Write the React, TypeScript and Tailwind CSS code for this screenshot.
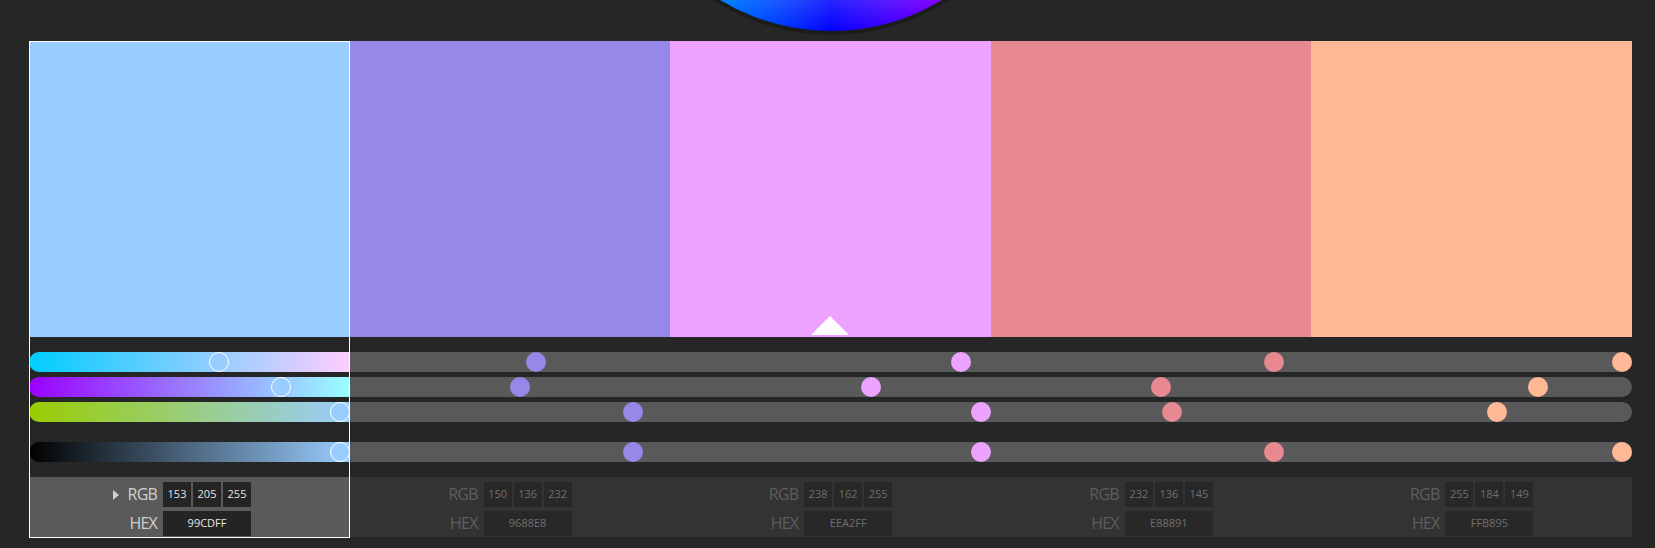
const swatches = [
  { rgb: [153, 205, 255], hex: "99CDFF" },
  { rgb: [150, 136, 232], hex: "9688E8" },
  { rgb: [238, 162, 255], hex: "EEA2FF" },
  { rgb: [232, 136, 145], hex: "E88891" },
  { rgb: [255, 184, 149], hex: "FFB895" },
];

const SELECTED = 0;
const MARKED = 2;

const rgbStr = (c: number[]) => `rgb(${c[0]}, ${c[1]}, ${c[2]})`;

function channelGradient(rgb: number[], ch: number) {
  const lo = [...rgb];
  const hi = [...rgb];
  lo[ch] = 0;
  hi[ch] = 255;
  return `linear-gradient(to right, ${rgbStr(lo)}, ${rgbStr(hi)})`;
}

function Track({
  idx,
  frac,
  color,
  gradient,
}: {
  idx: number;
  frac: number;
  color: string;
  gradient?: string;
}) {
  const round =
    idx === 0 ? "rounded-l-full" : idx === swatches.length - 1 ? "rounded-r-full" : "";
  return (
    <div
      className={`relative h-5 ${round} ${gradient ? "" : "bg-[#595959]"}`}
      style={gradient ? { background: gradient } : undefined}
    >
      <div
        className={`absolute top-0 h-5 w-5 rounded-full ${
          gradient ? "border-[1.5px] border-white" : ""
        }`}
        style={{ left: `calc((100% - 20px) * ${frac})`, backgroundColor: color }}
      />
    </div>
  );
}

function ValuePanel({ rgb, hex, active }: { rgb: number[]; hex: string; active: boolean }) {
  const label = active ? "text-[#cfcfcf]" : "text-[#5e5e5e]";
  const box = active ? "bg-[#242424] text-[#e6e6e6]" : "bg-[#282828] text-[#6f6f6f]";
  return (
    <div className={`flex h-[60px] justify-center pt-[4px] ${active ? "bg-[#5a5a5a]" : "bg-[#333333]"}`}>
      <div className="grid grid-cols-[auto_auto] items-center gap-x-[6px] gap-y-[2px]">
        <div className={`relative text-right text-[16px] leading-[25px] tracking-[-0.8px] ${label}`}>
          {active && (
            <svg className="absolute -left-[15px] top-[8px]" width="6" height="10" viewBox="0 0 6 10">
              <polygon points="0,0 6,5 0,10" fill="#cfcfcf" />
            </svg>
          )}
          RGB
        </div>
        <div className="flex gap-[2px]">
          {rgb.map((v, i) => (
            <div key={i} className={`flex h-[25px] w-[28px] items-center justify-center text-[11px] ${box}`}>
              {v}
            </div>
          ))}
        </div>
        <div className={`text-right text-[16px] leading-[25px] tracking-[-0.8px] ${label}`}>HEX</div>
        <div className={`flex h-[25px] w-[88px] items-center justify-center text-[11px] ${box}`}>{hex}</div>
      </div>
    </div>
  );
}

function Column({ idx }: { idx: number }) {
  const { rgb, hex } = swatches[idx];
  const color = "#" + hex;
  const active = idx === SELECTED;
  const value = Math.max(...rgb) / 255;
  return (
    <div className="relative flex flex-col">
      <div className="relative h-[296px]" style={{ backgroundColor: color }}>
        {idx === MARKED && (
          <svg
            className="absolute bottom-[2px] left-1/2 -translate-x-1/2"
            width="40"
            height="20"
            viewBox="0 0 40 20"
          >
            <polygon points="1,20 20,1 39,20" fill="#ffffff" />
          </svg>
        )}
      </div>
      <div className="mt-[15px] flex flex-col gap-[5px]">
        {[0, 1, 2].map((ch) => (
          <Track
            key={ch}
            idx={idx}
            frac={rgb[ch] / 255}
            color={color}
            gradient={active ? channelGradient(rgb, ch) : undefined}
          />
        ))}
      </div>
      <div className="mt-5">
        <Track
          idx={idx}
          frac={value}
          color={color}
          gradient={active ? `linear-gradient(to right, #000000, ${color})` : undefined}
        />
      </div>
      <div className="mt-[15px]">
        <ValuePanel rgb={rgb} hex={hex} active={active} />
      </div>
      {active && (
        <div className="pointer-events-none absolute inset-x-0 top-0 -bottom-px border border-white" />
      )}
    </div>
  );
}

export default function App() {
  return (
    <div
      className="relative h-[548px] w-full overflow-hidden bg-[#262626]"
      style={{ fontFamily: '"Open Sans", "Noto Sans", sans-serif' }}
    >
      {/* colour wheel, mostly scrolled out of view */}
      <div className="absolute left-[613px] top-[-401px] h-[436px] w-[436px] rounded-full border-4 border-[#1c1c1c] bg-[conic-gradient(hsl(60_100%_50%),hsl(0_100%_50%),hsl(300_100%_50%),hsl(240_100%_50%),hsl(180_100%_50%),hsl(120_100%_50%),hsl(60_100%_50%))]">
        <div className="h-full w-full rounded-full bg-[radial-gradient(closest-side,#ffffff,rgba(255,255,255,0))]" />
      </div>
      <div className="pl-[29px] pt-[41px]">
        <div className="grid w-[1603px] grid-cols-5">
          {swatches.map((_, i) => (
            <Column key={i} idx={i} />
          ))}
        </div>
      </div>
    </div>
  );
}
